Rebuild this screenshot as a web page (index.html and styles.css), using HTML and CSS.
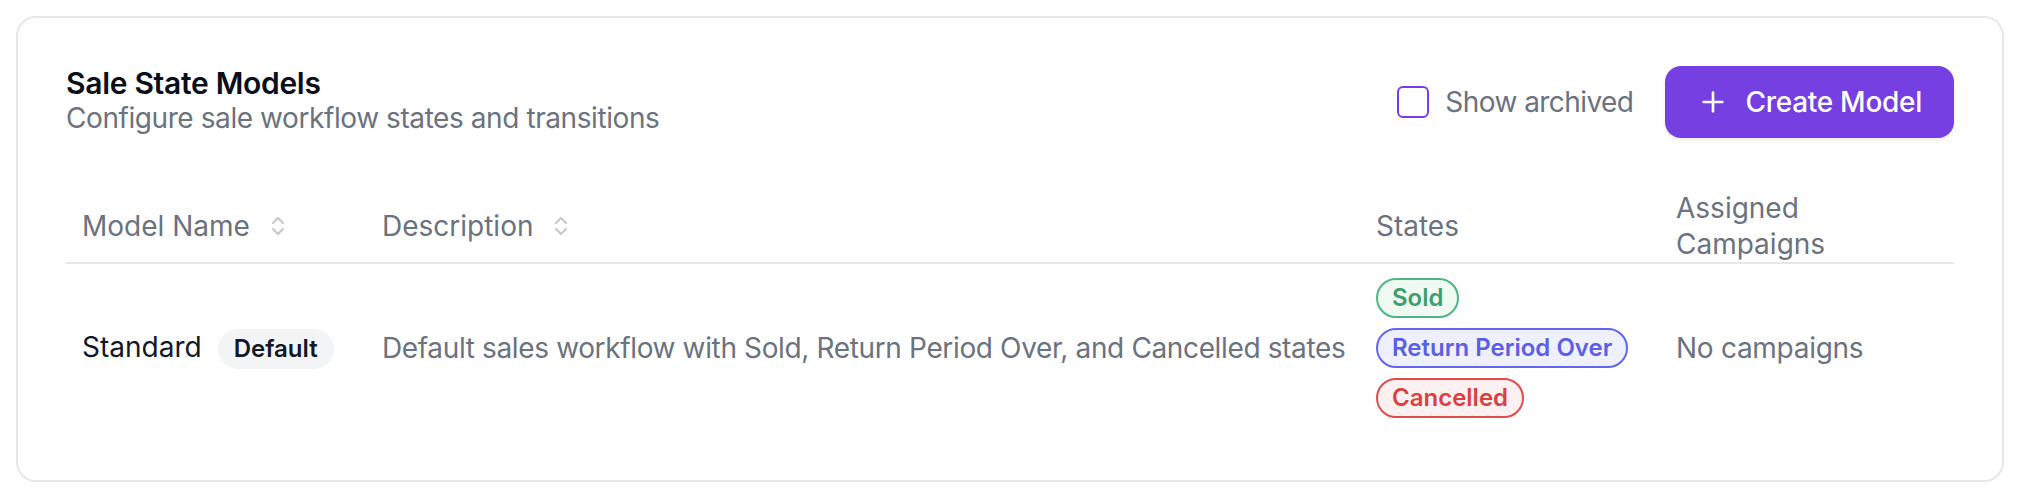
FILE: index.html
```html
<!DOCTYPE html>
<html lang="en">
<head>
<meta charset="utf-8">
<title>Sale State Models</title>
<link rel="stylesheet" href="styles.css">
</head>
<body>
<section class="card">
  <header class="card-head">
    <div class="head-text">
      <h2 class="title">Sale State Models</h2>
      <p class="subtitle">Configure sale workflow states and transitions</p>
    </div>
    <div class="actions">
      <label class="check"><span class="box"></span><span>Show archived</span></label>
      <button class="btn" type="button">
        <svg class="btn-icon" viewBox="0 0 24 24" fill="none" stroke="currentColor" stroke-width="2" stroke-linecap="round" stroke-linejoin="round"><path d="M5 12h14"/><path d="M12 5v14"/></svg>
        <span>Create Model</span>
      </button>
    </div>
  </header>
  <table class="models">
    <colgroup>
      <col class="c-name"><col class="c-desc"><col class="c-states"><col class="c-camp">
    </colgroup>
    <thead>
      <tr>
        <th><span class="sort">Model Name <svg class="sort-icon" viewBox="0 0 24 24" fill="none" stroke="currentColor" stroke-width="2" stroke-linecap="round" stroke-linejoin="round"><path d="m7 15 5 5 5-5"/><path d="m7 9 5-5 5 5"/></svg></span></th>
        <th><span class="sort">Description <svg class="sort-icon" viewBox="0 0 24 24" fill="none" stroke="currentColor" stroke-width="2" stroke-linecap="round" stroke-linejoin="round"><path d="m7 15 5 5 5-5"/><path d="m7 9 5-5 5 5"/></svg></span></th>
        <th>States</th>
        <th>Assigned<br>Campaigns</th>
      </tr>
    </thead>
    <tbody>
      <tr>
        <td><span class="name">Standard</span><span class="tag">Default</span></td>
        <td class="muted desc">Default sales workflow with Sold, Return Period Over, and Cancelled states</td>
        <td>
          <div class="states">
            <span class="pill pill-green">Sold</span>
            <span class="pill pill-indigo">Return Period Over</span>
            <span class="pill pill-red">Cancelled</span>
          </div>
        </td>
        <td class="muted tight">No campaigns</td>
      </tr>
    </tbody>
  </table>
</section>
</body>
</html>
```
FILE: styles.css
```css
html {
  zoom: 2;
}

body {
  margin: 8px 10px 8px 8px;
  font-family: Inter, "Noto Sans", sans-serif;
  color: #111827;
  background: #ffffff;
}

.card {
  border: 1px solid #e5e7eb;
  border-radius: 10px;
  padding: 24px;
  background: #ffffff;
}

.card-head {
  display: flex;
  align-items: center;
  justify-content: space-between;
}

.title {
  margin: 0;
  font-size: 15px;
  font-weight: 600;
  line-height: 16px;
  color: #0b0f1a;
  letter-spacing: -0.01em;
}

.subtitle {
  margin: 0;
  font-size: 14px;
  line-height: 19px;
  color: #6b7280;
  letter-spacing: -0.015em;
}

.actions {
  display: flex;
  align-items: center;
  gap: 16px;
}

.check {
  display: flex;
  align-items: center;
  gap: 8px;
  font-size: 14px;
  color: #6b7280;
  letter-spacing: -0.02em;
}

.box {
  width: 14px;
  height: 14px;
  border: 1px solid #7c3aed;
  border-radius: 3px;
}

.btn {
  display: flex;
  align-items: center;
  gap: 8px;
  height: 36px;
  padding: 0 16px;
  border: 0;
  border-radius: 8px;
  background: #763fe2;
  color: #ffffff;
  font-family: inherit;
  font-size: 14px;
  font-weight: 500;
  letter-spacing: -0.01em;
  box-shadow: 0 1px 2px rgba(0, 0, 0, 0.08);
}

.btn-icon {
  width: 16px;
  height: 16px;
}

.models {
  width: 100%;
  margin-top: 26px;
  border-collapse: collapse;
  table-layout: fixed;
  font-size: 14px;
}

.c-name { width: 150px; }
.c-desc { width: 497px; }
.c-states { width: 150px; }

th {
  padding: 0 8px;
  text-align: left;
  font-weight: 400;
  line-height: 18px;
  color: #6b7280;
  border-bottom: 1px solid #e5e7eb;
  vertical-align: middle;
}

.sort {
  display: inline-flex;
  align-items: center;
  gap: 8px;
}

.sort-icon {
  width: 12px;
  height: 12px;
  color: #c4c7cd;
}

td {
  padding: 7px 8px;
  line-height: 20px;
  vertical-align: middle;
}

.desc {
  white-space: nowrap;
  letter-spacing: -0.013em;
}

.tight {
  letter-spacing: -0.01em;
}

.name {
  color: #111827;
}

.tag {
  display: inline-block;
  margin-left: 8px;
  padding: 2px 8px;
  border-radius: 999px;
  background: #f3f4f6;
  font-size: 12px;
  font-weight: 600;
  line-height: 16px;
  color: #111827;
}

.muted {
  color: #6b7280;
}

.states {
  display: flex;
  flex-direction: column;
  align-items: flex-start;
  gap: 5px;
}

.pill {
  padding: 1px 7px;
  border: 1px solid;
  border-radius: 999px;
  font-size: 12px;
  font-weight: 600;
  line-height: 16px;
}

.pill-green {
  border-color: #4fb683;
  background: #effaf3;
  color: #3f9f6d;
}

.pill-indigo {
  border-color: #6366f1;
  background: #eef0fd;
  color: #5b5ee6;
}

.pill-red {
  border-color: #de4d4d;
  background: #fdf0f0;
  color: #d94242;
}
```
